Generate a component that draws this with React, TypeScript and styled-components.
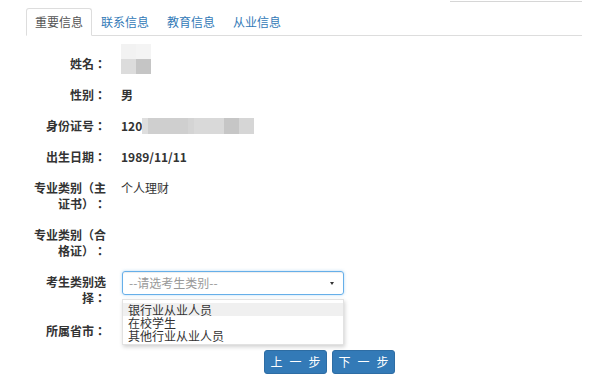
import React from "react";
import styled, { createGlobalStyle } from "styled-components";

const Global = createGlobalStyle`
  html, body { margin: 0; padding: 0; background: #fff; }
  body {
    font-family: "Noto Sans CJK SC", "Microsoft YaHei", sans-serif;
    font-size: 12px;
    color: #333;
    text-spacing-trim: space-all;
  }
  * { box-sizing: border-box; }
`;

const Page = styled.div`
  width: 602px;
  height: 389px;
  padding: 1px 20px 0 26px;
  overflow: hidden;
`;

const TopRule = styled.div`
  height: 1px;
  width: 132px;
  margin-left: 424px;
  background: #d6d6d6;
`;

const Tabs = styled.ul`
  list-style: none;
  margin: 6px 0 0 0;
  padding: 0;
  display: flex;
  border-bottom: 1px solid #dddddd;
  width: 556px;
`;

const Tab = styled.li<{ $active?: boolean }>`
  height: 28px;
  margin-bottom: -1px;
  padding: 0 8px;
  line-height: 26px;
  border: 1px solid ${(p) => (p.$active ? "#dddddd" : "transparent")};
  border-bottom-color: ${(p) => (p.$active ? "#fff" : "transparent")};
  border-radius: 3px 3px 0 0;
  background: ${(p) => (p.$active ? "#fff" : "transparent")};
  color: ${(p) => (p.$active ? "#555" : "#337ab7")};
  white-space: nowrap;
`;

const Form = styled.div`
  margin-top: 20px;
  position: relative;
`;

const Row = styled.div<{ $gap?: number }>`
  display: flex;
  align-items: flex-start;
  line-height: 16px;
  margin-bottom: ${(p) => p.$gap ?? 15}px;
`;

const Label = styled.div`
  width: 80px;
  flex: none;
  text-align: right;
  font-family: "Noto Sans CJK TC", "Noto Sans CJK SC", sans-serif;
  font-weight: bold;
  color: #333;
  text-spacing-trim: space-all;
`;

const Value = styled.div<{ $bold?: boolean }>`
  margin-left: 15px;
  font-weight: ${(p) => (p.$bold ? "bold" : "normal")};
  display: flex;
  align-items: flex-start;
  position: relative;
`;

const Blur = styled.svg<{ $top?: number; $bottom?: number }>`
  display: block;
  margin-top: ${(p) => p.$top ?? 0}px;
  margin-bottom: ${(p) => p.$bottom ?? 0}px;
`;

const SelectBox = styled.div`
  position: relative;
  width: 222px;
  height: 24px;
  margin-top: -3px;
  margin-left: 1px;
  border: 1px solid #66afe9;
  border-radius: 3px;
  box-shadow: inset 0 1px 1px rgba(0, 0, 0, 0.075), 0 0 3px rgba(102, 175, 233, 0.5);
  padding-left: 6px;
  line-height: 22px;
  color: #999;
  font-weight: normal;
`;

const Caret = styled.span`
  position: absolute;
  right: 9px;
  top: 10px;
  width: 0;
  height: 0;
  border-left: 2.5px solid transparent;
  border-right: 2.5px solid transparent;
  border-top: 3px solid #333;
`;

const Dropdown = styled.ul`
  position: absolute;
  left: 1px;
  top: 25px;
  width: 222px;
  margin: 0;
  padding: 3px 0 2px 0;
  list-style: none;
  background: #fff;
  border: 1px solid #e2e2e2;
  box-shadow: 1px 2px 4px rgba(0, 0, 0, 0.18);
  z-index: 5;
`;

const Option = styled.li<{ $hover?: boolean }>`
  height: 13px;
  line-height: 13px;
  padding-left: 5px;
  color: #333;
  font-weight: normal;
  background: ${(p) => (p.$hover ? "#f0f0f0" : "transparent")};
`;

const ButtonBar = styled.div`
  display: flex;
  gap: 5px;
  padding-left: 238px;
  margin-top: -4px;
`;

const Button = styled.button`
  width: 63px;
  height: 24px;
  padding: 0;
  border: 1px solid #2e6da4;
  border-radius: 3px;
  background: #337ab7;
  color: #fff;
  font-family: inherit;
  font-size: 12px;
  line-height: 22px;
  text-align: center;
  white-space: nowrap;
`;

const ButtonText = styled.span`
  letter-spacing: 7px;
  margin-right: -7px;
`;

export default function App() {
  return (
    <>
      <Global />
      <Page>
        <TopRule />
        <Tabs>
          <Tab $active>重要信息</Tab>
          <Tab>联系信息</Tab>
          <Tab>教育信息</Tab>
          <Tab>从业信息</Tab>
        </Tabs>
        <Form>
          <Row>
            <Label>姓名：</Label>
            <Value>
              <Blur width="30" height="30" viewBox="0 0 30 30" $top={-12} $bottom={-2}>
                <rect x="0" y="0" width="15" height="15" fill="#f2f2f2" />
                <rect x="15" y="0" width="15" height="15" fill="#f4f4f4" />
                <rect x="0" y="15" width="15" height="15" fill="#dcdcdc" />
                <rect x="15" y="15" width="15" height="15" fill="#c5c5c5" />
              </Blur>
            </Value>
          </Row>
          <Row>
            <Label>性别：</Label>
            <Value $bold>男</Value>
          </Row>
          <Row>
            <Label>身份证号：</Label>
            <Value $bold>
              120
              <Blur width="112" height="16" viewBox="0 0 112 16">
                <rect x="0" y="0" width="6" height="16" fill="#dedede" />
                <rect x="6" y="0" width="40" height="16" fill="#cfcfcf" />
                <rect x="46" y="0" width="6" height="16" fill="#d4d4d4" />
                <rect x="52" y="0" width="30" height="16" fill="#d9d9d9" />
                <rect x="82" y="0" width="15" height="16" fill="#c6c6c6" />
                <rect x="97" y="0" width="15" height="16" fill="#d6d6d6" />
              </Blur>
            </Value>
          </Row>
          <Row>
            <Label>出生日期：</Label>
            <Value $bold>1989/11/11</Value>
          </Row>
          <Row>
            <Label>专业类别（主证书）：</Label>
            <Value>个人理财</Value>
          </Row>
          <Row>
            <Label>专业类别（合格证）：</Label>
            <Value />
          </Row>
          <Row $gap={17}>
            <Label>考生类别选择：</Label>
            <Value>
              <SelectBox>
                --请选考生类别--
                <Caret />
              </SelectBox>
              <Dropdown>
                <Option $hover>银行业从业人员</Option>
                <Option>在校学生</Option>
                <Option>其他行业从业人员</Option>
              </Dropdown>
            </Value>
          </Row>
          <Row>
            <Label>所属省市：</Label>
            <Value />
          </Row>
          <ButtonBar>
            <Button>
              <ButtonText>上一步</ButtonText>
            </Button>
            <Button>
              <ButtonText>下一步</ButtonText>
            </Button>
          </ButtonBar>
        </Form>
      </Page>
    </>
  );
}
